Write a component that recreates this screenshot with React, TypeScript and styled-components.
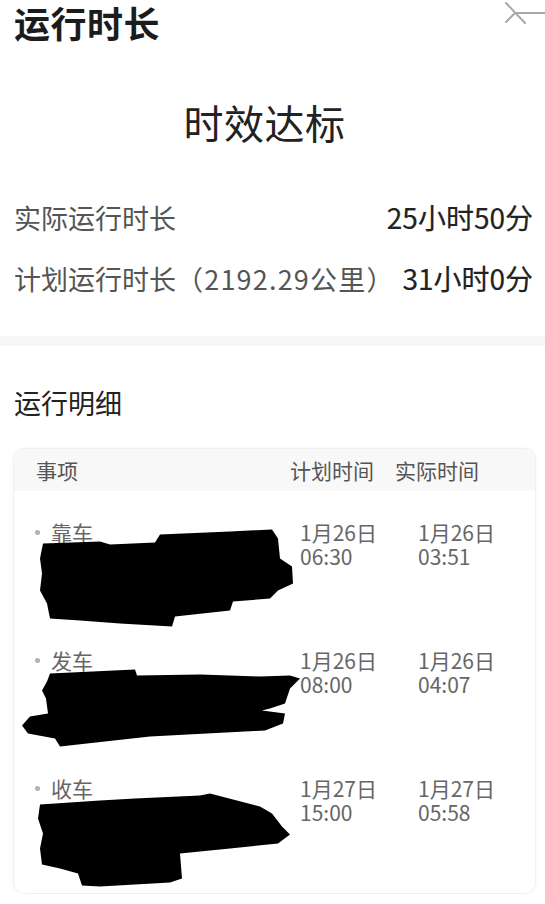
import React from "react";
import styled, { createGlobalStyle } from "styled-components";

const Global = createGlobalStyle`
  html, body { margin: 0; padding: 0; background: #ffffff; }
  body { font-family: "Noto Sans CJK SC", "Noto Sans", sans-serif; }
`;

const Page = styled.div`
  width: 545px;
  box-sizing: border-box;
  padding: 0 12px 0 14px;
  background: #fff;
`;

const HeaderRow = styled.div`
  display: flex;
  justify-content: space-between;
  align-items: flex-start;
`;

const Title = styled.h1`
  margin: 0;
  font-size: 36px;
  line-height: 44px;
  font-weight: 700;
  color: #1c1c1c;
  letter-spacing: 0.5px;
`;

const CloseIcon = styled.svg`
  margin-right: -12px;
  flex: none;
`;

const Status = styled.div`
  margin-top: 50px;
  padding-right: 18px;
  text-align: center;
  font-size: 40px;
  line-height: 56px;
  color: #222;
  letter-spacing: 0.5px;
`;

const Stats = styled.div`
  margin-top: 47px;
  display: flex;
  flex-direction: column;
  gap: 21px;
`;

const StatRow = styled.div`
  display: flex;
  justify-content: space-between;
  align-items: center;
  height: 40px;
  font-size: 27px;
`;

const StatLabel = styled.span`
  color: #555;
`;

const Distance = styled.span`
  letter-spacing: 1.2px;
`;

const StatValue = styled.span`
  color: #222;
  font-weight: 400;
  font-size: 28px;
  -webkit-text-stroke: 0.2px #222;
`;

const Divider = styled.div`
  margin: 38px -12px 0 -14px;
  height: 10px;
  background: #f6f6f6;
`;

const SectionTitle = styled.h2`
  margin: 37px 0 0;
  font-size: 27px;
  line-height: 40px;
  font-weight: 400;
  color: #222;
`;

const Card = styled.div`
  margin: 25px -3px 0 -1px;
  border: 1px solid #f0f0f0;
  border-radius: 12px;
  box-shadow: 0 0 4px rgba(0, 0, 0, 0.04);
  overflow: hidden;
  background: #fff;
`;

const TableHead = styled.div`
  display: grid;
  grid-template-columns: 254px 105px 1fr;
  align-items: center;
  height: 42px;
  padding-left: 22px;
  background: #f8f8f8;
  font-size: 21px;
  color: #555;
`;

const Rows = styled.div`
  display: flex;
  flex-direction: column;
  gap: 12px;
  padding-top: 29px;
  padding-bottom: 1px;
`;

const Row = styled.div`
  display: grid;
  grid-template-columns: 267px 118px 1fr;
  padding-left: 19px;
  font-size: 21px;
  line-height: 24px;
  color: #666;
`;

const Cell = styled.div`
  display: flex;
  flex-direction: column;
`;

const DateText = styled.span`
  white-space: pre-line;
`;

const ItemLabel = styled.div`
  display: flex;
  align-items: center;
  height: 24px;
`;

const Dot = styled.span`
  width: 5px;
  height: 5px;
  border-radius: 50%;
  background: #b0b0b0;
  margin: 0 11px 0 2px;
`;

const Redaction = styled.svg`
  display: block;
  margin-top: -8px;
  overflow: visible;
  filter: blur(0.7px);
`;

const blobs = [
  {
    top: 537.5,
    points:
      "43,545 100,543 110,546 155,544 160,536 230,533 272,531 278,540 280,560 292,568 293,585 278,592 270,600 233,603 230,612 175,618 172,628 120,625 80,622 50,620 47,605 40,592 42,575 40,560",
  },
  {
    top: 665.5,
    points:
      "50,675 135,671 137,677 200,676 260,678 290,677 300,680 290,690 285,705 270,710 262,712 285,715 283,725 265,732 150,738 60,748 55,740 28,735 22,727 30,718 48,715 46,700 42,692 47,683",
  },
  {
    top: 793.5,
    points:
      "40,806 100,802 135,800 200,797 210,795 260,808 272,815 282,828 290,836 278,845 230,850 180,855 182,880 170,884 100,888 82,887 78,875 60,870 42,866 40,850 43,835 38,820",
  },
];

const items = [
  { name: "靠车", plan: "1月26日\n06:30", actual: "1月26日\n03:51" },
  { name: "发车", plan: "1月26日\n08:00", actual: "1月26日\n04:07" },
  { name: "收车", plan: "1月27日\n15:00", actual: "1月27日\n05:58" },
];

export default function App() {
  return (
    <Page>
      <Global />
      <HeaderRow>
        <Title>运行时长</Title>
        <CloseIcon width="45" height="28" viewBox="500 0 45 28">
          <g stroke="#a8a8a8" strokeWidth="2" strokeLinecap="round" fill="none">
            <line x1="506" y1="3" x2="525" y2="23" />
            <line x1="506" y1="22" x2="515" y2="13" />
            <line x1="515" y1="13" x2="545" y2="13" />
          </g>
        </CloseIcon>
      </HeaderRow>
      <Status>时效达标</Status>
      <Stats>
        <StatRow>
          <StatLabel>实际运行时长</StatLabel>
          <StatValue>25小时50分</StatValue>
        </StatRow>
        <StatRow>
          <StatLabel>
            计划运行时长<Distance>（2192.29公里）</Distance>
          </StatLabel>
          <StatValue>31小时0分</StatValue>
        </StatRow>
      </Stats>
      <Divider />
      <SectionTitle>运行明细</SectionTitle>
      <Card>
        <TableHead>
          <span>事项</span>
          <span>计划时间</span>
          <span>实际时间</span>
        </TableHead>
        <Rows>
          {items.map((it, i) => (
            <Row key={it.name}>
              <Cell>
                <ItemLabel>
                  <Dot />
                  {it.name}
                </ItemLabel>
                <Redaction
                  width="260"
                  height="100"
                  viewBox={`33 ${blobs[i].top} 260 100`}
                >
                  <polygon points={blobs[i].points} fill="#000" />
                </Redaction>
              </Cell>
              <Cell>
                <DateText>{it.plan}</DateText>
              </Cell>
              <Cell>
                <DateText>{it.actual}</DateText>
              </Cell>
            </Row>
          ))}
        </Rows>
      </Card>
    </Page>
  );
}
